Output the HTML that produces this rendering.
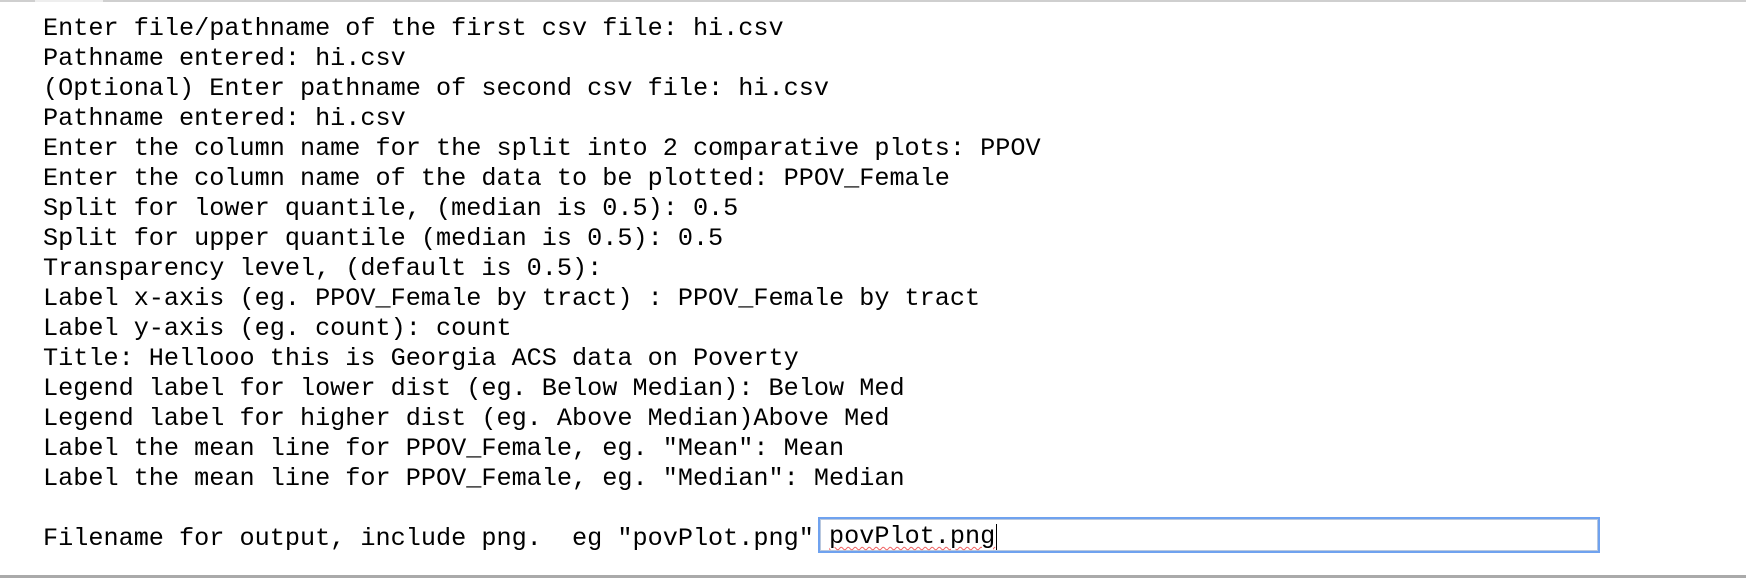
<!DOCTYPE html>
<html><head><style>
html,body{margin:0;padding:0;background:#fff;width:1746px;height:578px;overflow:hidden;position:relative}
.t{position:absolute;left:43px;top:14px;font-family:"Liberation Mono",monospace;font-size:25.2px;line-height:30px;color:#000;white-space:pre;margin:0}
.box{position:absolute;left:818px;top:517px;width:778px;height:32px;border:2px solid #6fa2ef;box-shadow:inset 0 0 0 1px #b9c8de;background:#fff}
.in{position:absolute;left:829px;top:522px;font-family:"Liberation Mono",monospace;font-size:25.2px;line-height:30px;white-space:pre;text-decoration:underline wavy #f06060;text-decoration-thickness:1px;text-underline-offset:3px}
.cur{position:absolute;left:996px;top:524px;width:1px;height:26px;background:#000}
</style></head><body>
<div style="position:absolute;left:0;top:0;width:1746px;height:2px;background:#cfcfcf"></div>
<div style="position:absolute;left:35px;top:0;width:68px;height:2px;background:#eee"></div>
<pre class="t">Enter file/pathname of the first csv file: hi.csv
Pathname entered: hi.csv
(Optional) Enter pathname of second csv file: hi.csv
Pathname entered: hi.csv
Enter the column name for the split into 2 comparative plots: PPOV
Enter the column name of the data to be plotted: PPOV_Female
Split for lower quantile, (median is 0.5): 0.5
Split for upper quantile (median is 0.5): 0.5
Transparency level, (default is 0.5):
Label x-axis (eg. PPOV_Female by tract) : PPOV_Female by tract
Label y-axis (eg. count): count
Title: Hellooo this is Georgia ACS data on Poverty
Legend label for lower dist (eg. Below Median): Below Med
Legend label for higher dist (eg. Above Median)Above Med
Label the mean line for PPOV_Female, eg. "Mean": Mean
Label the mean line for PPOV_Female, eg. "Median": Median

Filename for output, include png.  eg "povPlot.png"</pre>
<div class="box"></div>
<div class="in">povPlot.png</div>
<div class="cur"></div>
<div style="position:absolute;left:0;top:575px;width:1746px;height:3px;background:#aaa"></div>
</body></html>
